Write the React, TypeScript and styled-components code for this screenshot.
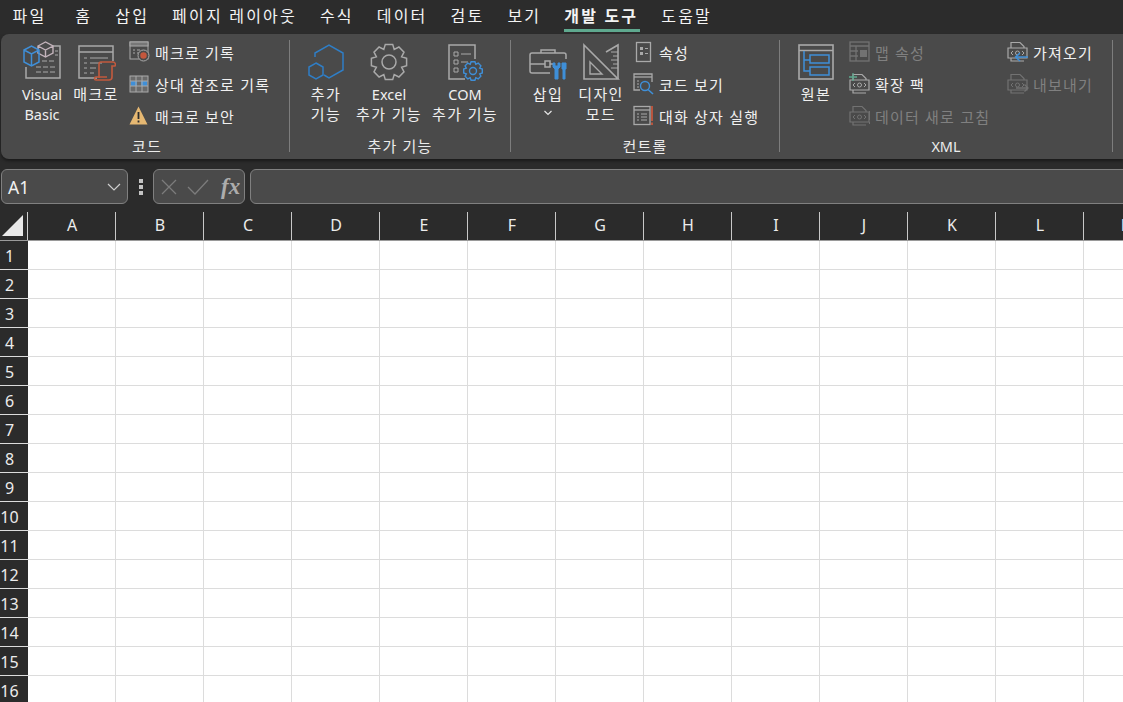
import React from 'react'
import styled, { createGlobalStyle } from 'styled-components'

const FONT = `"Noto Sans", "Noto Sans CJK KR", sans-serif`
const GREY = '#a9a9a9'
const DIM = '#727272'
const BLUE = '#3f8fd8'

const tabs = ['파일', '홈', '삽입', '페이지 레이아웃', '수식', '데이터', '검토', '보기', '개발 도구', '도움말']
const columns = ['A', 'B', 'C', 'D', 'E', 'F', 'G', 'H', 'I', 'J', 'K', 'L', 'M']
const rows = Array.from({ length: 16 }, (_, i) => i + 1)

const gear = (cx: number, cy: number, r: number, teeth: number) => {
  const inner = r * 0.76
  const pts: string[] = []
  const step = (Math.PI * 2) / teeth
  for (let i = 0; i < teeth; i++) {
    const a = i * step - Math.PI / 2
    const offs: [number, number][] = [
      [-0.5, inner],
      [-0.26, r],
      [0.26, r],
      [0.5, inner],
    ]
    offs.forEach(([o, rad]) => {
      const t = a + o * step
      pts.push(`${(cx + Math.cos(t) * rad).toFixed(1)},${(cy + Math.sin(t) * rad).toFixed(1)}`)
    })
  }
  return pts.join(' ')
}

const Large = ({ children }: { children: React.ReactNode }) => (
  <Ico width="40" height="40" viewBox="0 0 40 40">{children}</Ico>
)
const Small = ({ children }: { children: React.ReactNode }) => (
  <Ico width="22" height="22" viewBox="0 0 22 22">{children}</Ico>
)

const VbaIcon = () => (
  <Large>
    <path d="M31 5H38V37H4V26" stroke={GREY} strokeWidth="1.5" />
    <path d="M33 10H36M33 14H36M20 20H34M14 26H34M14 31H34" stroke={GREY} strokeDasharray="5 2" />
    <path d="M16 5L23.5 1L31 5V12L23.5 16L16 12ZM16 5L23.5 9L31 5M23.5 9V16" stroke="#c4b4bc" strokeWidth="1.4" />
    <path d="M2 9L9.5 5L17 9V21L9.5 25L2 21ZM2 9L9.5 13L17 9M9.5 13V25" stroke={BLUE} strokeWidth="1.5" />
  </Large>
)

const MacroIcon = () => (
  <Large>
    <path d="M21 37H3V5H37V20" stroke={GREY} strokeWidth="1.5" />
    <path d="M3 11H37" stroke={GREY} strokeWidth="1.5" />
    <path d="M8 17H11M14 17H32M8 22H11M14 22H26M8 27H11M14 27H20M8 32H11M14 32H18" stroke={GREY} />
    <path d="M23 37V23C23 22 24 21 25 21H37C39 21 40 23 39 25H36V36C36 38 35 39 33 39H20C18 39 18 36 20 36H31" stroke="#c25a3e" strokeWidth="1.6" />
  </Large>
)

const AddinIcon = () => (
  <Large>
    <path d="M9 16V12L23 4L37 12V29L23 37L18 34" stroke="#2f7ec6" strokeWidth="1.5" />
    <path d="M10 22L17 26V34L10 38L3 34V26Z" stroke="#2f7ec6" strokeWidth="1.5" />
  </Large>
)

const GearIcon = () => (
  <Large>
    <polygon points={gear(20, 21, 18, 8)} stroke={GREY} strokeWidth="1.5" />
    <circle cx="20" cy="21" r="7" stroke={GREY} strokeWidth="1.5" />
  </Large>
)

const ComIcon = () => (
  <Large>
    <path d="M20 38H4V4H30V18" stroke={GREY} strokeWidth="1.5" />
    <path d="M9 11H13V15H9ZM9 19H13V23H9ZM9 27H13V31H9Z" stroke={GREY} />
    <path d="M16 13H26M16 21H23" stroke={GREY} />
    <polygon points={gear(28, 30, 9.5, 8)} stroke={BLUE} strokeWidth="1.4" />
    <circle cx="28" cy="30" r="3.5" stroke={BLUE} strokeWidth="1.4" />
  </Large>
)

const ToolboxIcon = () => (
  <Large>
    <path d="M22 32H4C3 32 2 31 2 30V14C2 13 3 12 4 12H36C37 12 38 13 38 14V18" stroke={GREY} strokeWidth="1.5" />
    <path d="M13 12V9H27V12M2 23H17M22 23H25" stroke={GREY} strokeWidth="1.5" />
    <rect x="17" y="20" width="5" height="6" stroke={GREY} strokeWidth="1.5" />
    <path d="M25 22V26L27 28V38H30V28L32 26V22L30 22V25H27V22Z" fill={BLUE} stroke={BLUE} />
    <path d="M34 22H38V28H37V38H35V28H34Z" fill={BLUE} stroke={BLUE} />
  </Large>
)

const RulerIcon = () => (
  <Large>
    <path d="M3 4L37 38H3Z" stroke={GREY} strokeWidth="1.6" />
    <path d="M9 21L21 33H9Z" stroke={GREY} strokeWidth="1.4" />
    <path d="M25 11L37 4V38" stroke={GREY} strokeWidth="1.6" />
    <path d="M30 11H37M32 15H37M30 19H37M32 23H37M30 27H37" stroke={GREY} />
  </Large>
)

const SourceIcon = () => (
  <Large>
    <rect x="3" y="4" width="34" height="34" stroke={GREY} strokeWidth="1.6" />
    <path d="M3 9.5H37" stroke={GREY} strokeWidth="1.6" />
    <path d="M8 10V30H14M8 19H14" stroke={BLUE} strokeWidth="1.5" />
    <rect x="14" y="14" width="19" height="8" stroke={BLUE} strokeWidth="1.5" />
    <rect x="14" y="26" width="19" height="8" stroke={BLUE} strokeWidth="1.5" />
  </Large>
)

const RecordIcon = () => (
  <Small>
    <rect x="1" y="1" width="18" height="17" stroke={GREY} />
    <rect x="1" y="1" width="18" height="4" fill="#777" stroke={GREY} />
    <path d="M4 9H6M4 12H6M8 9H11M8 12H10" stroke={GREY} />
    <circle cx="14.5" cy="14.5" r="5.5" fill="#4a4a4a" stroke={GREY} />
    <circle cx="14.5" cy="14.5" r="3.2" fill="#c4573d" />
  </Small>
)

const RelativeIcon = () => (
  <Small>
    <rect x="1" y="3" width="18" height="16" fill="#6a6a6a" stroke={GREY} />
    <rect x="2" y="8" width="6" height="5" fill={BLUE} />
    <rect x="12" y="8" width="6" height="5" fill={BLUE} />
    <path d="M1 8H19M1 13H19M7 3V19M13 3V19" stroke={GREY} />
  </Small>
)

const WarnIcon = () => (
  <Small>
    <path d="M9.5 1.5L18.5 19.5H.5Z" fill="#e6b872" />
    <path d="M9.5 7V14M9.5 15.5V17.5" stroke="#2c2c2c" strokeWidth="1.8" />
  </Small>
)

const PropsIcon = () => (
  <Small>
    <rect x="3.5" y="1.5" width="14" height="19" stroke={GREY} strokeWidth="1.3" />
    <rect x="7" y="6" width="3" height="3" fill={GREY} />
    <rect x="7" y="11" width="3" height="3" fill={GREY} />
    <path d="M12 7.5H15M12 12.5H15" stroke={GREY} />
  </Small>
)

const CodeIcon = () => (
  <Small>
    <path d="M19 9V1H1V17H7" stroke={GREY} strokeWidth="1.3" />
    <path d="M1 4H19" stroke={GREY} strokeWidth="1.3" />
    <path d="M4 8H6M4 11H6M4 14H6" stroke={GREY} />
    <circle cx="12" cy="13" r="4.5" stroke={BLUE} strokeWidth="1.4" />
    <path d="M15 16.5L20 21" stroke={BLUE} strokeWidth="1.6" />
  </Small>
)

const DialogIcon = () => (
  <Small>
    <rect x="1" y="1.5" width="16" height="18" stroke={GREY} strokeWidth="1.3" />
    <path d="M1 5H17" stroke={GREY} strokeWidth="1.3" />
    <path d="M4 9H6M8 9H14M4 12H6M8 12H14M4 15H6M8 15H14" stroke={GREY} />
    <path d="M19 1V16M19 17.5V20" stroke="#c4573d" strokeWidth="1.8" />
  </Small>
)

const MapIcon = () => (
  <Small>
    <rect x="1" y="1" width="19" height="19" stroke={DIM} strokeWidth="1.3" />
    <path d="M1 5H20M1 10H9M1 15H9M7 5V20" stroke={DIM} strokeWidth="1.3" />
    <rect x="11" y="9" width="7" height="7" fill={DIM} />
  </Small>
)

const XmlDoc = ({ tone }: { tone: string }) => (
  <>
    <path d="M4 7V1.5H13L17 5.5V7M1 7H20V17H1ZM4 17V20H17" stroke={tone} strokeWidth="1.2" />
    <path d="M6 10L4 12L6 14M15 10L17 12L15 14" stroke={tone} />
    <circle cx="10.5" cy="12" r="2" stroke={tone} />
  </>
)

const PackIcon = () => (
  <Small>
    <XmlDoc tone={GREY} />
    <path d="M4 0V8M0 4H8" stroke="#5fa98f" strokeWidth="1.3" />
  </Small>
)

const RefreshIcon = () => (
  <Small>
    <XmlDoc tone={DIM} />
    <path d="M20.5 6V15M20.5 17V19" stroke={DIM} />
  </Small>
)

const ImportIcon = () => (
  <Small>
    <XmlDoc tone={GREY} />
    <path d="M21 16H9M13 12L8.5 16L13 20" stroke={BLUE} strokeWidth="1.4" />
  </Small>
)

const ExportIcon = () => (
  <Small>
    <XmlDoc tone={DIM} />
    <path d="M9 15H21M17.5 11.5L21 15L17.5 18.5" stroke={DIM} strokeWidth="1.3" />
  </Small>
)

const App = () => {
  return (
    <Page>
      <GlobalStyle />
      <TabBar>
        {tabs.map((t) => (
          <Tab key={t} $active={t === '개발 도구'}>{t}</Tab>
        ))}
      </TabBar>

      <Ribbon>
        <Group $width={288}>
          <Items $pad={13}>
            <BigButton $width={56}><VbaIcon /><BigLabel><Latin>Visual<br />Basic</Latin></BigLabel></BigButton>
            <BigButton $width={52}><MacroIcon /><BigLabel>매크로</BigLabel></BigButton>
            <SmallColumn $left={7}>
              <SmallRow><RecordIcon /><SmallLabel>매크로 기록</SmallLabel></SmallRow>
              <SmallRow><RelativeIcon /><SmallLabel>상대 참조로 기록</SmallLabel></SmallRow>
              <SmallRow><WarnIcon /><SmallLabel>매크로 보안</SmallLabel></SmallRow>
            </SmallColumn>
          </Items>
          <GroupLabel $nudge={4}>코드</GroupLabel>
        </Group>
        <Separator />

        <Group $width={220}>
          <Items $pad={10}>
            <BigButton $width={52}><AddinIcon /><BigLabel>추가<br />기능</BigLabel></BigButton>
            <BigButton $width={74}><GearIcon /><BigLabel><Latin>Excel</Latin><br />추가 기능</BigLabel></BigButton>
            <BigButton $width={78}><ComIcon /><BigLabel><Latin>COM</Latin><br />추가 기능</BigLabel></BigButton>
          </Items>
          <GroupLabel>추가 기능</GroupLabel>
        </Group>
        <Separator />

        <Group $width={268}>
          <Items $pad={11}>
            <BigButton $width={52}>
              <ToolboxIcon />
              <BigLabel>삽입</BigLabel>
              <Caret width="10" height="6" viewBox="0 0 10 6"><path d="M1.5 1L5 4.5L8.5 1" stroke="#e6e6e6" strokeWidth="1.2" fill="none" /></Caret>
            </BigButton>
            <BigButton $width={54}><RulerIcon /><BigLabel>디자인<br />모드</BigLabel></BigButton>
            <SmallColumn $left={5}>
              <SmallRow><PropsIcon /><SmallLabel>속성</SmallLabel></SmallRow>
              <SmallRow><CodeIcon /><SmallLabel>코드 보기</SmallLabel></SmallRow>
              <SmallRow><DialogIcon /><SmallLabel>대화 상자 실행</SmallLabel></SmallRow>
            </SmallColumn>
          </Items>
          <GroupLabel>컨트롤</GroupLabel>
        </Group>
        <Separator />

        <Group $width={332}>
          <Items $pad={12}>
            <BigButton $width={48}><SourceIcon /><BigLabel>원본</BigLabel></BigButton>
            <SmallColumn $left={9} $width={158}>
              <SmallRow><MapIcon /><SmallLabel $off>맵 속성</SmallLabel></SmallRow>
              <SmallRow><PackIcon /><SmallLabel>확장 팩</SmallLabel></SmallRow>
              <SmallRow><RefreshIcon /><SmallLabel $off>데이터 새로 고침</SmallLabel></SmallRow>
            </SmallColumn>
            <SmallColumn>
              <SmallRow><ImportIcon /><SmallLabel>가져오기</SmallLabel></SmallRow>
              <SmallRow><ExportIcon /><SmallLabel $off>내보내기</SmallLabel></SmallRow>
            </SmallColumn>
          </Items>
          <GroupLabel><Latin>XML</Latin></GroupLabel>
        </Group>
        <Separator />
      </Ribbon>

      <FormulaBar>
        <NameBox>
          <NameText>A1</NameText>
          <svg width="14" height="8" viewBox="0 0 14 8"><path d="M1 1L7 7L13 1" stroke="#cfcfcf" strokeWidth="1.2" fill="none" /></svg>
        </NameBox>
        <Dots><Dot /><Dot /><Dot /></Dots>
        <FxBox>
          <svg width="18" height="18" viewBox="0 0 18 18"><path d="M2 2L16 16M16 2L2 16" stroke="#7c7c7c" strokeWidth="1.3" fill="none" /></svg>
          <svg width="22" height="18" viewBox="0 0 22 18"><path d="M1 9L8 16L21 2" stroke="#7c7c7c" strokeWidth="1.3" fill="none" /></svg>
          <FxText>fx</FxText>
        </FxBox>
        <FormulaInput />
      </FormulaBar>

      <Sheet>
        <HeaderRow>
          <Corner>
            <svg width="22" height="22" viewBox="0 0 22 22"><path d="M21 0V21H0Z" fill="#e9e9e9" /></svg>
          </Corner>
          {columns.map((c) => (
            <ColHead key={c}>{c}</ColHead>
          ))}
        </HeaderRow>
        {rows.map((r) => (
          <Row key={r}>
            <RowHead>{r}</RowHead>
            {columns.map((c) => (
              <Cell key={c} />
            ))}
          </Row>
        ))}
      </Sheet>
    </Page>
  )
}

export default App

const GlobalStyle = createGlobalStyle`
html, body {
  margin: 0;
  padding: 0;
  background: #2b2b2b;
  overflow: hidden;
}
`

const Page = styled.div`
width: 1123px;
height: 702px;
overflow: hidden;
background: #2b2b2b;
font-family: ${FONT};
color: #f0f0f0;
`

const TabBar = styled.div`
display: flex;
height: 34px;
padding-left: 1px;
background: #2c2c2c;
`

const Tab = styled.div<{ $active?: boolean }>`
position: relative;
padding: 0 11.5px;
line-height: 32px;
font-size: 16px;
letter-spacing: 2.2px;
white-space: nowrap;
font-weight: ${(p) => (p.$active ? 700 : 400)};
color: #f4f4f4;

&:first-child {
  margin-right: 6px;
}

&::after {
  content: '';
  display: ${(p) => (p.$active ? 'block' : 'none')};
  position: absolute;
  left: 11.5px;
  right: 10px;
  bottom: 2px;
  height: 3px;
  background: #5fa98f;
}
`

const Ribbon = styled.div`
display: flex;
height: 125px;
margin-left: 1px;
background: #4a4a4a;
border-radius: 8px 0 0 8px;
box-shadow: 0 2px 3px rgba(0, 0, 0, 0.4);
`

const Group = styled.div<{ $width: number }>`
display: flex;
flex-direction: column;
flex: none;
width: ${(p) => p.$width}px;
padding-top: 3px;
box-sizing: border-box;
`

const Items = styled.div<{ $pad: number }>`
display: flex;
height: 99px;
padding-left: ${(p) => p.$pad}px;
`

const Latin = styled.span`
font-size: 14.5px;
letter-spacing: 0;
`

const GroupLabel = styled.div<{ $nudge?: number }>`
padding-left: ${(p) => p.$nudge ?? 0}px;
text-align: center;
font-size: 15px;
letter-spacing: 1.2px;
line-height: 20px;
color: #ececec;
`

const Separator = styled.div`
flex: none;
width: 1px;
height: 112px;
margin-top: 6px;
background: #7d7d7d;
`

const BigButton = styled.div<{ $width: number }>`
display: flex;
flex-direction: column;
align-items: center;
flex: none;
width: ${(p) => p.$width}px;
padding-top: 4px;
`

const BigLabel = styled.div`
margin-top: 3px;
font-size: 15px;
letter-spacing: 1.4px;
line-height: 20px;
text-align: center;
white-space: nowrap;
color: #f0f0f0;
`

const Caret = styled.svg`
margin-top: 6px;
`

const Ico = styled.svg`
flex: none;
fill: none;
display: block;
`

const SmallColumn = styled.div<{ $left?: number; $width?: number }>`
display: flex;
flex-direction: column;
flex: none;
margin-top: -1px;
margin-left: ${(p) => p.$left ?? 0}px;
width: ${(p) => (p.$width ? `${p.$width}px` : 'auto')};
`

const SmallRow = styled.div`
display: flex;
align-items: center;
height: 32px;
gap: 4px;
`

const SmallLabel = styled.span<{ $off?: boolean }>`
font-size: 15px;
letter-spacing: 1.2px;
white-space: nowrap;
color: ${(p) => (p.$off ? '#808080' : '#f0f0f0')};
`

const FormulaBar = styled.div`
display: flex;
align-items: center;
height: 35px;
margin-top: 10px;
padding-left: 1px;
`

const NameBox = styled.div`
display: flex;
align-items: center;
justify-content: space-between;
flex: none;
box-sizing: border-box;
width: 127px;
height: 35px;
padding: 0 6px;
background: #4a4a4a;
border: 1px solid #808080;
border-radius: 6px;
`

const NameText = styled.span`
font-size: 17.5px;
color: #f0f0f0;
`

const Dots = styled.div`
display: flex;
flex-direction: column;
align-items: center;
gap: 2px;
flex: none;
width: 25px;
`

const Dot = styled.div`
width: 4px;
height: 4px;
background: #c4c4c4;
`

const FxBox = styled.div`
display: flex;
align-items: center;
gap: 9px;
flex: none;
box-sizing: border-box;
width: 92px;
height: 35px;
padding-left: 6px;
background: #4a4a4a;
border: 1px solid #808080;
border-radius: 6px;
`

const FxText = styled.span`
margin-left: 3px;
font-family: "Liberation Serif", serif;
font-style: italic;
font-weight: 700;
font-size: 23px;
line-height: 30px;
color: #acacac;
`

const FormulaInput = styled.div`
flex: none;
box-sizing: border-box;
width: 900px;
height: 35px;
margin-left: 5px;
background: #4a4a4a;
border: 1px solid #808080;
border-radius: 6px;
`

const Sheet = styled.div`
margin-top: 8px;
`

const HeaderRow = styled.div`
display: flex;
height: 28px;
border-bottom: 1px solid #9a9a9a;
background: #2b2b2b;
`

const Corner = styled.div`
display: flex;
align-items: flex-end;
justify-content: flex-end;
box-sizing: border-box;
flex: none;
width: 28px;
padding: 0 3px 3px 0;
border-right: 1px solid #d0d0d0;
`

const ColHead = styled.div`
flex: none;
box-sizing: border-box;
width: 88px;
padding-left: 1px;
line-height: 27px;
text-align: center;
font-size: 16px;
color: #ececec;
border-right: 1px solid #c8c8c8;
`

const Row = styled.div`
display: flex;
height: 29px;
box-sizing: border-box;
border-bottom: 1px solid #dcdcdc;
background: #fff;
`

const RowHead = styled.div`
flex: none;
box-sizing: border-box;
width: 28px;
line-height: 31px;
padding-right: 9px;
font-size: 16px;
text-align: center;
background: #2b2b2b;
color: #ececec;
`

const Cell = styled.div`
flex: none;
box-sizing: border-box;
width: 88px;
border-right: 1px solid #dcdcdc;
`
